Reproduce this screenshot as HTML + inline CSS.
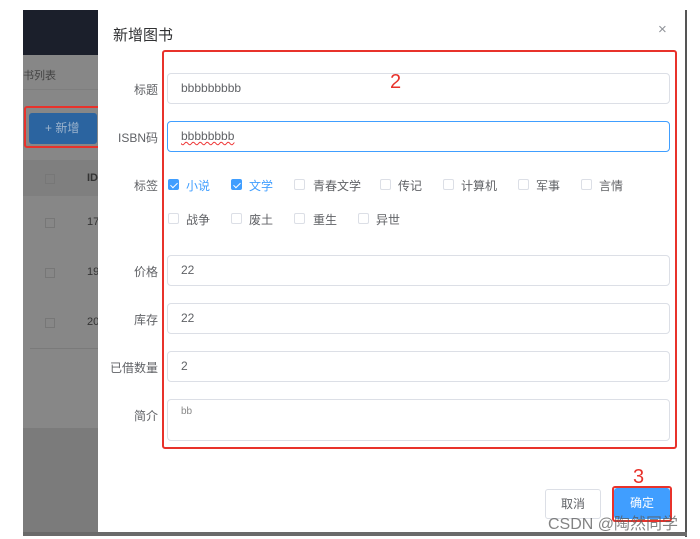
<!DOCTYPE html>
<html><head><meta charset="utf-8"><style>
*{margin:0;padding:0;box-sizing:border-box}
body{width:700px;height:539px;background:#fff;position:relative;overflow:hidden;font-family:"Liberation Sans","Noto Sans CJK SC",sans-serif;font-size:12px;color:#606266}
.a{position:absolute}
.inp{position:absolute;left:167px;width:503px;height:31px;border:1px solid #dcdfe6;border-radius:4px;padding-left:13px;line-height:29px;color:#606266;font-size:12px;background:#fff}
.lab{position:absolute;width:60px;left:98px;text-align:right;font-size:12px;color:#606266}
.cb{position:absolute;width:11px;height:11px;border:1px solid #dcdfe6;border-radius:2px;background:#fff}
.cb.on{background:#409eff;border-color:#409eff}
.cb.on:after{content:"";position:absolute;left:3px;top:1px;width:3px;height:6px;border:solid #fff;border-width:0 1px 1px 0;transform:rotate(45deg)}
.ct{position:absolute;font-size:12px;color:#606266}
.ct.on{color:#409eff}
</style></head><body>
<div class="a" style="left:23px;top:10px;width:75px;height:45px;background:#1b1f2b"></div>
<div class="a" style="left:23px;top:55px;width:75px;height:373px;background:#878787"></div>
<div class="a" style="left:23px;top:428px;width:75px;height:107px;background:#7b7b7b"></div>
<div class="a" style="left:23px;top:67px;color:#444;font-size:11px">书列表</div>
<div class="a" style="left:23px;top:89px;width:75px;height:1px;background:#7e7e7e"></div>
<div class="a" style="left:29px;top:113px;width:68px;height:31px;background:#2b64a0;border-radius:3px;color:#9cb3cc;line-height:31px;padding-left:16px;font-size:12px">+ 新增</div>
<div class="a" style="left:24px;top:106px;width:82px;height:42px;border:2px solid #e8322b;border-radius:3px"></div>
<div class="a" style="left:105px;top:77px;color:#e8322b;font-size:20px">1</div>
<div class="a" style="left:23px;top:160px;width:75px;height:36px;background:#7f7f7f"></div>
<div class="a" style="left:45px;top:174px;width:10px;height:10px;border:1px solid #777"></div><div class="a" style="left:87px;top:172px;color:#333;font-weight:bold;font-size:11px">ID</div>
<div class="a" style="left:45px;top:218px;width:10px;height:10px;border:1px solid #777"></div><div class="a" style="left:87px;top:216px;color:#333;font-size:11px">17</div>
<div class="a" style="left:45px;top:268px;width:10px;height:10px;border:1px solid #777"></div><div class="a" style="left:87px;top:266px;color:#333;font-size:11px">19</div>
<div class="a" style="left:45px;top:318px;width:10px;height:10px;border:1px solid #777"></div><div class="a" style="left:87px;top:316px;color:#333;font-size:11px">20</div>
<div class="a" style="left:30px;top:348px;width:68px;height:1px;background:#7a7a7a"></div>
<div class="a" style="left:98px;top:10px;width:587px;height:525px;background:#fff"></div>
<div class="a" style="left:685px;top:10px;width:2px;height:527px;background:#555"></div>
<div class="a" style="left:23px;top:532px;width:664px;height:4px;background:#6a6a6a"></div>
<div class="a" style="left:113px;top:24px;font-size:15px;color:#303133">新增图书</div>
<div class="a" style="left:658px;top:21px;font-size:15px;color:#909399">×</div>
<div class="lab" style="top:81px">标题</div>
<div class="inp" style="top:73px">bbbbbbbbb</div>
<div class="lab" style="top:129px">ISBN码</div>
<div class="inp" style="top:121px;border-color:#409eff"><span style="text-decoration:underline wavy #e33;text-decoration-thickness:1px">bbbbbbbb</span></div>
<div class="lab" style="top:177px">标签</div>
<div class="cb on" style="left:168px;top:179px"></div><div class="ct on" style="left:186px;top:177px">小说</div>
<div class="cb on" style="left:231px;top:179px"></div><div class="ct on" style="left:249px;top:177px">文学</div>
<div class="cb" style="left:294px;top:179px"></div><div class="ct" style="left:313px;top:177px">青春文学</div>
<div class="cb" style="left:380px;top:179px"></div><div class="ct" style="left:398px;top:177px">传记</div>
<div class="cb" style="left:443px;top:179px"></div><div class="ct" style="left:461px;top:177px">计算机</div>
<div class="cb" style="left:518px;top:179px"></div><div class="ct" style="left:536px;top:177px">军事</div>
<div class="cb" style="left:581px;top:179px"></div><div class="ct" style="left:599px;top:177px">言情</div>
<div class="cb" style="left:168px;top:213px"></div><div class="ct" style="left:186px;top:211px">战争</div>
<div class="cb" style="left:231px;top:213px"></div><div class="ct" style="left:249px;top:211px">废土</div>
<div class="cb" style="left:294px;top:213px"></div><div class="ct" style="left:313px;top:211px">重生</div>
<div class="cb" style="left:358px;top:213px"></div><div class="ct" style="left:376px;top:211px">异世</div>
<div class="lab" style="top:263px">价格</div>
<div class="inp" style="top:255px">22</div>
<div class="lab" style="top:311px">库存</div>
<div class="inp" style="top:303px">22</div>
<div class="lab" style="top:359px">已借数量</div>
<div class="inp" style="top:351px">2</div>
<div class="lab" style="top:407px">简介</div>
<div class="inp" style="top:399px;height:42px;line-height:20px;padding-top:2px;font-size:10px;color:#888">bb</div>
<div class="a" style="left:162px;top:50px;width:515px;height:399px;border:2px solid #e8322b;border-radius:3px"></div>
<div class="a" style="left:390px;top:71px;color:#e8322b;font-size:20px">2</div>
<div class="a" style="left:545px;top:489px;width:56px;height:30px;border:1px solid #dcdfe6;border-radius:3px;text-align:center;line-height:28px;color:#606266">取消</div>
<div class="a" style="left:614px;top:488px;width:56px;height:31px;background:#409eff;border-radius:3px;text-align:center;line-height:30px;color:#fff">确定</div>
<div class="a" style="left:612px;top:486px;width:60px;height:36px;border:2px solid #e8322b;border-radius:3px"></div>
<div class="a" style="left:633px;top:466px;color:#e8322b;font-size:20px">3</div>
<div class="a" style="left:548px;top:510px;font-size:16px;color:rgba(90,90,90,.75)">CSDN @陶然同学</div>
</body></html>
